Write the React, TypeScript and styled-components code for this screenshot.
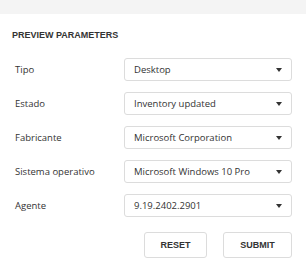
import React from 'react'
import styled, { createGlobalStyle } from 'styled-components'

const GlobalStyle = createGlobalStyle`
  html, body {
    margin: 0;
    padding: 0;
    background: #ffffff;
  }
  body {
    font-family: 'Open Sans', 'Liberation Sans', sans-serif;
  }
`

const Page = styled.div`
  width: 306px;
  height: 267px;
  display: flex;
  flex-direction: column;
  background: #ffffff;
`

const TopBand = styled.div`
  height: 14px;
  background: #f4f4f4;
`

const Panel = styled.div`
  display: flex;
  flex-direction: column;
  padding: 0 14px 0 12px;
`

const Title = styled.h3`
  margin: 15px 0 0;
  font-family: 'Liberation Sans', Arial, sans-serif;
  font-size: 9px;
  font-weight: 700;
  color: #333333;
  line-height: 12px;
  height: 12px;
`

const Fields = styled.div`
  display: flex;
  flex-direction: column;
  gap: 11px;
  margin-top: 17px;
`

const Row = styled.div`
  display: grid;
  grid-template-columns: 112px 168px;
  align-items: center;
`

const Label = styled.label`
  padding-left: 3px;
  font-size: 9.5px;
  color: #333333;
`

const Select = styled.div`
  height: 23px;
  box-sizing: border-box;
  border: 1px solid #dcdcdc;
  border-radius: 3px;
  display: flex;
  align-items: center;
  justify-content: space-between;
  padding: 0 9px 0 9px;
  font-size: 9.5px;
  color: #333333;
`

const Caret = styled.span`
  width: 0;
  height: 0;
  border-left: 3.5px solid transparent;
  border-right: 3.5px solid transparent;
  border-top: 4px solid #333333;
`

const Actions = styled.div`
  display: flex;
  justify-content: flex-end;
  gap: 16px;
  margin-top: 15px;
`

const Button = styled.button<{ $w: number }>`
  width: ${p => p.$w}px;
  height: 26px;
  box-sizing: border-box;
  border: 1px solid #dcdcdc;
  border-radius: 3px;
  background: #ffffff;
  font-family: 'Liberation Sans', Arial, sans-serif;
  font-size: 9px;
  font-weight: 700;
  color: #333333;
  padding: 0;
`

const params = [
  { label: 'Tipo', value: 'Desktop' },
  { label: 'Estado', value: 'Inventory updated' },
  { label: 'Fabricante', value: 'Microsoft Corporation' },
  { label: 'Sistema operativo', value: 'Microsoft Windows 10 Pro' },
  { label: 'Agente', value: '9.19.2402.2901' },
]

export default function App() {
  return (
    <>
      <GlobalStyle />
      <Page>
        <TopBand />
        <Panel>
          <Title>PREVIEW PARAMETERS</Title>
          <Fields>
            {params.map(p => (
              <Row key={p.label}>
                <Label>{p.label}</Label>
                <Select>
                  <span>{p.value}</span>
                  <Caret />
                </Select>
              </Row>
            ))}
          </Fields>
          <Actions>
            <Button $w={63}>RESET</Button>
            <Button $w={69}>SUBMIT</Button>
          </Actions>
        </Panel>
      </Page>
    </>
  )
}
